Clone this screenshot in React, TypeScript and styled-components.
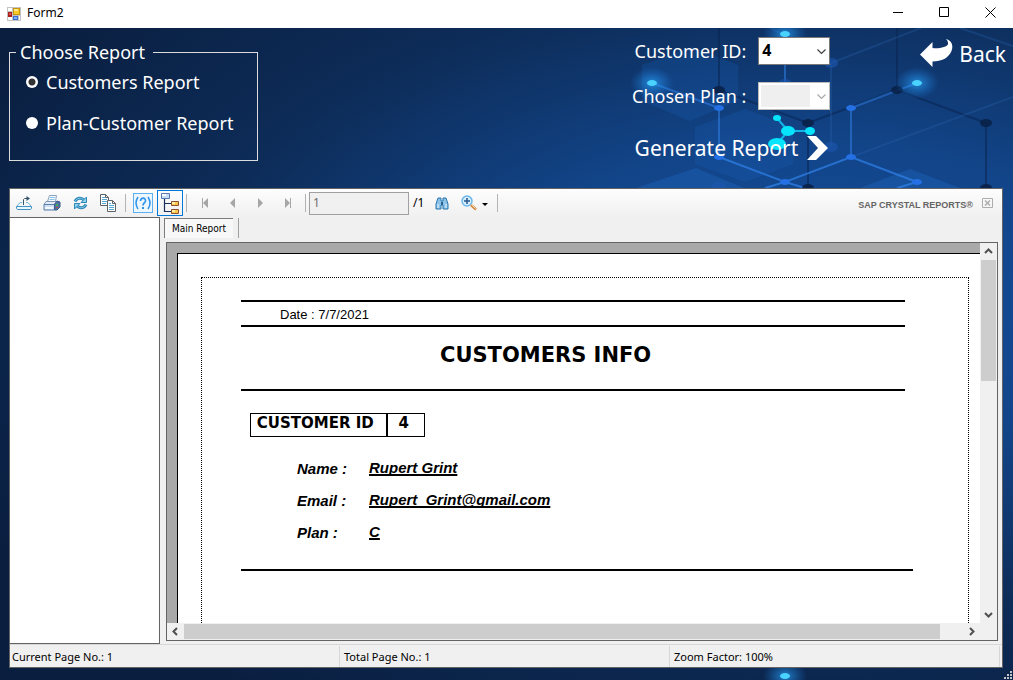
import React from "react";
import styled, { createGlobalStyle } from "styled-components";

const ui = `"Segoe UI", "Noto Sans", "Open Sans", sans-serif`;
const casual = `"Noto Sans", "Open Sans", sans-serif`;
const arial = `Arial, "Liberation Sans", sans-serif`;
const black = `"Arial Black", "DejaVu Sans", sans-serif`;

const GlobalStyle = createGlobalStyle`
  *, *::before, *::after { box-sizing: border-box; }
  body { margin: 0; font-family: ${ui}; font-size: 12px; color: #000; }
  button, input, select { font: inherit; color: inherit; }
  button { background: none; border: 0; padding: 0; }
`;

const Window = styled.div`
  display: flex;
  flex-direction: column;
  min-height: 100vh;
`;

const TitleBar = styled.header`
  display: flex;
  align-items: center;
  height: 28px;
  padding-left: 7px;
  background: #fff;
`;

const Title = styled.h1`
  flex: 1;
  margin: 0 0 3px 6px;
  font-size: 12px;
  font-weight: 400;
  line-height: 16px;
`;

const CaptionButton = styled.button`
  display: flex;
  align-items: center;
  justify-content: center;
  width: 46px;
  height: 28px;
  padding-bottom: 4px;
`;

const Form = styled.main`
  flex: 1;
  display: grid;
  grid-template-columns: minmax(0, 1fr);
  background: radial-gradient(ellipse 78% 62% at 80% 42%, #14509f 0%, #124488 40%, #0d2c58 78%, #0a1e3f 120%);

  > * { grid-area: 1 / 1; }
`;

const Backdrop = styled.svg`
  justify-self: end;
  align-self: start;
`;

const Content = styled.div`
  display: flex;
  flex-direction: column;
  z-index: 1;
`;

const TopArea = styled.div`
  display: flex;
  justify-content: space-between;
  height: 160px;
  padding: 9px 7px 0 9px;
  color: #fff;
  font-family: ${casual};
  font-size: 18px;
  line-height: 26px;
`;

const ReportChoice = styled.fieldset`
  width: 249px;
  height: 122px;
  margin: 2px 0 0;
  padding: 4px 0 0 16px;
  border: 1px solid #dcdcdc;
`;

const Legend = styled.legend`
  margin-left: -10px;
  padding: 0 8px 0 4px;
`;

const RadioLabel = styled.label`
  display: flex;
  align-items: center;
  gap: 8px;
  margin-bottom: 15px;
`;

const Radio = styled.input`
  appearance: none;
  width: 12px;
  height: 12px;
  margin: 0;
  border-radius: 50%;
  background: #fff;

  &:checked { background: radial-gradient(circle, #333 0 3px, #fff 4px); }
`;

const Controls = styled.div`
  display: flex;
  align-items: flex-start;
  gap: 90px;
`;

const Fields = styled.div`
  display: flex;
  flex-direction: column;
  align-items: flex-end;
`;

const Field = styled.div`
  display: flex;
  align-items: center;
  gap: 12px;
  height: 28px;
  margin-bottom: 17px;
`;

const SelectBox = styled.span`
  position: relative;
  display: flex;
  width: 72px;
  height: 28px;

  svg { position: absolute; right: 4px; top: 11px; pointer-events: none; }
`;

const Select = styled.select`
  appearance: none;
  width: 100%;
  padding: 0 0 3px 3px;
  border: 1px solid #7a7a7a;
  border-radius: 0;
  background: #fff;
  color: #000;
  font-size: 16px;
  font-weight: 700;
  line-height: 22px;

  &:disabled {
    opacity: 1;
    border-color: #bcbcbc;
    background: linear-gradient(#efefef, #efefef) 2px 2px / 49px 22px no-repeat #fff;
  }
`;

const ActionButton = styled.button<{ $gap: number }>`
  display: flex;
  align-items: center;
  gap: ${(p) => p.$gap}px;
  font-size: 21px;
`;

const GenerateSlot = styled.div`
  margin: 8px 2px 0 0;
`;

const BackSlot = styled.div`
  padding-top: 2px;
`;

const Viewer = styled.section`
  flex: 1;
  display: flex;
  flex-direction: column;
  margin: 0 10px 0 9px;
  border: 1px solid #646464;
  background: #f0f0f0;
`;

const ToolBar = styled.div`
  display: flex;
  align-items: center;
  height: 28px;
  background: linear-gradient(#fdfdfd, #f0f0f0);
`;

const Tool = styled.button<{ $width?: number; $active?: boolean }>`
  display: flex;
  align-items: center;
  justify-content: center;
  width: ${(p) => p.$width ?? 28}px;
  height: 26px;
  border: 1px solid ${(p) => (p.$active ? "#0078d7" : "transparent")};
`;

const Divider = styled.span`
  width: 1px;
  height: 18px;
  margin: 0 3px;
  background: #b4b4b4;
`;

const PageInput = styled.input`
  width: 100px;
  height: 23px;
  padding: 0 0 2px 3px;
  border: 1px solid #a0a0a0;
  background: #f0f0f0;
  color: #6d6d6d;
`;

const PageTotal = styled.span`
  width: 15px;
  margin: 0 0 1px 4px;
`;

const Brand = styled.span`
  margin-left: auto;
  padding-top: 3px;
  color: #646464;
  font-family: ${arial};
  font-size: 9px;
  font-weight: 700;
`;

const CloseTool = styled(Tool)`
  margin-right: 1px;
`;

const ViewerBody = styled.div`
  flex: 1;
  display: flex;
  min-height: 0;
`;

const GroupTree = styled.aside`
  width: 150px;
  border: solid #646464;
  border-width: 1px 1px 1px 0;
  background: #fff;
`;

const ReportArea = styled.div`
  flex: 1;
  display: flex;
  flex-direction: column;
  min-width: 0;
  padding: 0 4px 3px 6px;
`;

const TabStrip = styled.div`
  display: flex;
  height: 25px;
  margin-left: -2px;
`;

const Tab = styled.button`
  height: 20px;
  width: 69px;
  margin-top: 1px;
  border: solid #7c7c7c;
  border-width: 1px 0 0 1px;
  background: #f8f8f8;
  font-family: Tahoma, "DejaVu Sans Condensed", "Noto Sans", sans-serif;
  font-size: 10px;
  line-height: 16px;
  white-space: nowrap;
`;

const TabEnd = styled.span`
  width: 1px;
  height: 20px;
  margin: 1px 0 0 5px;
  background: #a0a0a0;
`;

const Pane = styled.div`
  flex: 1;
  display: grid;
  grid-template-columns: minmax(0, 1fr) 17px;
  grid-template-rows: minmax(0, 1fr) 17px;
  border: 1px solid #646464;
`;

const Canvas = styled.div`
  padding: 10px 0 0 10px;
  background: #a9a9a9;
  display: flex;
`;

const Sheet = styled.article`
  flex: 1;
  display: flex;
  padding: 23px 11px 0 23px;
  border: solid #000;
  border-width: 1px 0 0 1px;
  background: #fff;
  font-family: ${arial};
`;

const SheetBody = styled.div`
  flex: 1;
  padding: 22px 55px 0 39px;
  border: dotted #000;
  border-width: 1px 1px 0 1px;
`;

const Rule = styled.hr<{ $inset?: boolean }>`
  height: 2px;
  margin: 0 ${(p) => (p.$inset ? 8 : 0)}px 0 0;
  border: 0;
  background: #000;
`;

const DateLine = styled.p`
  margin: 0;
  padding: 5px 0 2px 39px;
  font-size: 13px;
  line-height: 16px;
`;

const ReportTitle = styled.h2`
  margin: 0;
  padding: 16px 0 22px 199px;
  font-family: ${black};
  font-size: 21px;
  font-weight: 900;
  line-height: 24px;
`;

const IdTable = styled.table`
  table-layout: fixed;
  width: 175px;
  margin: 22px 0 0 9px;
  border-collapse: collapse;
  font-family: ${black};
  font-size: 15px;
  font-weight: 900;
  line-height: 18px;

  th, td {
    height: 22px;
    padding: 0 0 4px;
    border: 1px solid #000;
    font-weight: 900;
    text-align: center;
    white-space: nowrap;
  }
  th { width: 136px; padding-right: 6px; border-right-width: 2px; }
  td { padding-right: 4px; }
`;

const Details = styled.dl`
  display: grid;
  grid-template-columns: 72px 1fr;
  row-gap: 12px;
  margin: 21px 0 27px 56px;
  font-size: 15px;
  font-style: italic;
  font-weight: 700;
  line-height: 20px;
`;

const Term = styled.dt`
  padding-top: 1px;
  height: 20px;
`;

const Value = styled.dd`
  margin: 0;
  text-decoration: underline 2px;
  text-underline-offset: 1px;
  text-decoration-skip-ink: none;
`;

const ScrollBar = styled.div<{ $vertical?: boolean }>`
  display: flex;
  flex-direction: ${(p) => (p.$vertical ? "column" : "row")};
  background: #f0f0f0;
  padding: ${(p) => (p.$vertical ? "0 1px" : "1px 0")};
`;

const ScrollArrow = styled.button`
  display: flex;
  align-items: center;
  justify-content: center;
  flex: 0 0 17px;
`;

const Track = styled.div<{ $vertical?: boolean }>`
  flex: 1;
  display: flex;
  flex-direction: ${(p) => (p.$vertical ? "column" : "row")};
`;

const Thumb = styled.div<{ $size: number }>`
  flex: 0 0 ${(p) => p.$size}%;
  background: #cdcdcd;
`;

const StatusBar = styled.footer`
  display: grid;
  grid-template-columns: 1fr 1fr 1fr;
  height: 23px;
  padding-right: 2px;
  border-top: 1px solid #d7d7d7;
  font-size: 11px;
`;

const StatusCell = styled.span`
  margin: 1px 0;
  padding-left: 2px;
  border-right: 1px solid #d7d7d7;
  line-height: 21px;

  & + & { padding-left: 4px; }
`;

const BottomEdge = styled.div`
  display: flex;
  justify-content: flex-end;
  align-items: flex-end;
  height: 12px;
`;

const AppIcon = () => (
  <svg width="14" height="14" viewBox="0 0 14 14" aria-hidden="true">
    <path d="M0 0h14v14H0z" fill="#c3c3c3" />
    <path d="M1 1h4v3H1zM1 10h4v3H1zM12 9h1v4h-1z" fill="#fff" />
    <path d="M6 1h7v7H6z" fill="#c8960c" />
    <path d="M7 2h5v5H7z" fill="#fbc928" />
    <path d="M7 2h4v2H7z" fill="#ffe88a" />
    <path d="M1 5h4v5H1z" fill="#a81c1c" />
    <path d="M2 6h2v2H2z" fill="#d9534f" />
    <path d="M6 9h5v4H6z" fill="#3a6fd0" />
    <path d="M7 10h3v2H7z" fill="#7fb0ff" />
  </svg>
);

const Chevron = ({ color }: { color: string }) => (
  <svg width="9" height="7" viewBox="0 0 9 7" fill="none" stroke={color} aria-hidden="true">
    <path d="M.5 1.500l4 4 4-4" strokeWidth="1.200" />
  </svg>
);

const arrowTurn = { up: 0, right: 90, down: 180, left: 270 };
const ScrollGlyph = ({ to }: { to: keyof typeof arrowTurn }) => (
  <svg width="9" height="9" viewBox="0 0 9 9" fill="none" stroke="#505050" strokeWidth="2" aria-hidden="true">
    <path d="M1 6l3.500-3.500L8 6" transform={`rotate(${arrowTurn[to]} 4.500 4.500)`} />
  </svg>
);

const NavGlyph = ({ bar, back }: { bar?: boolean; back?: boolean }) => (
  <svg width="9" height="10" viewBox="0 0 9 10" fill="#a6a6a6" aria-hidden="true">
    <g transform={back ? "translate(9 0) scale(-1 1)" : undefined}>
      <path d={bar ? "M1 0l5 5-5 5z" : "M2 0l5 5-5 5z"} />
      {bar && <path d="M6 0h1v10H6z" />}
    </g>
  </svg>
);

const ExportIcon = () => (
  <svg width="18" height="16" viewBox="0 0 18 16" fill="none" aria-hidden="true">
    <path d="M1.500 11.500h15v2l-1 1h-13l-1-1z" fill="#eaf6fd" stroke="#3f93c8" />
    <path d="M2 11l3-3.500h2M11 7.500h2l3 3.500" stroke="#6fb5dc" />
    <path d="M8.500 10V4.500l1-1H13" stroke="#35546e" />
    <path d="M11.500 1l3.500 2.500L11.500 6z" fill="#35546e" />
  </svg>
);

const PrintIcon = () => (
  <svg width="18" height="16" viewBox="0 0 18 16" aria-hidden="true">
    <path d="M6.500.5h7l-1 6h-8z" fill="#f4f9fd" stroke="#8ea4bf" />
    <path d="M7 2.500h5M6.500 4.500h5" stroke="#8cc4ea" />
    <path d="M3 6.500h11l-3 3H1z" fill="#e3ecf6" stroke="#7d95b3" />
    <path d="M1 9.500h10.500V15H1z" fill="#cfe0f3" stroke="#5b7fae" />
    <path d="M2 12h8v2H2z" fill="#f3f8fd" />
    <path d="M11.500 9.500L14 6l3 1v5l-3 3h-2.500z" fill="#4f72a6" stroke="#3c5a88" />
    <path d="M13 9h2v2h-2z" fill="#42b052" />
    <path d="M13 12h2v1h-2z" fill="#c84848" />
  </svg>
);

const RefreshIcon = () => (
  <svg width="15" height="14" viewBox="0 0 15 14" fill="none" aria-hidden="true">
    <path d="M2 5.500C4 1.500 8 1.500 11 4M13 8.500c-2 4-6 4-9 1.500" stroke="#2f87b8" strokeWidth="3" />
    <path d="M2 5.500C4 1.500 8 1.500 11 4M13 8.500c-2 4-6 4-9 1.500" stroke="#7fcbea" />
    <path d="M13.500 1v5.500H8zM1.500 13V7.500H7z" fill="#8fd3ef" stroke="#2f87b8" />
  </svg>
);

const CopyIcon = () => (
  <svg width="18" height="18" viewBox="0 0 18 18" fill="none" aria-hidden="true">
    <path d="M1.500.5h5l3 3v8h-8z" fill="#fff" stroke="#5d6268" />
    <path d="M6.500.5v3h3" stroke="#5d6268" />
    <path d="M3 3.500h3M3 5.500h5M3 7.500h5M3 9.500h4" stroke="#55a8d8" />
    <path d="M8.500 6.500h5l3 3v8h-8z" fill="#fff" stroke="#5d6268" />
    <path d="M13.500 6.500v3h3" stroke="#5d6268" />
    <path d="M10 9.500h2M10 11.500h5M10 13.500h5M10 15.500h5" stroke="#55a8d8" />
  </svg>
);

const HelpIcon = () => (
  <svg width="20" height="20" viewBox="0 0 20 20" fill="none" aria-hidden="true">
    <rect x=".5" y=".5" width="19" height="19" fill="#edf7ff" stroke="#5cb0f2" />
    <path d="M5 4Q1 10 5 16M15 4q4 6 0 12" stroke="#2f93ec" strokeWidth="1.500" />
    <path d="M7.500 8c0-4 5.500-3.500 5 0-.3 2-2.500 2-2.500 4.500" stroke="#2f93ec" strokeWidth="1.700" />
    <path d="M9 14h2v2H9z" fill="#2f93ec" />
  </svg>
);

const TreeIcon = () => (
  <svg width="20" height="22" viewBox="0 0 20 22" fill="none" aria-hidden="true">
    <path d="M4.500 7v12.500H12M4.500 11.500H12" stroke="#1c2f5c" strokeWidth="1.200" />
    <path d="M1.500 1.500h8v5h-8z" fill="#c7ddf8" stroke="#5a78ad" />
    <path d="M2 2h4v2H2z" fill="#fff" />
    <path d="M11.500 9.500h7v4h-7zM11.500 17.500h7v4h-7z" fill="#ffc64a" stroke="#8a5230" />
    <path d="M12 10h3v2h-3zM12 18h3v2h-3z" fill="#fff0a8" />
  </svg>
);

const FindIcon = () => (
  <svg width="14" height="13" viewBox="0 0 14 13" aria-hidden="true">
    <path d="M3 1h3v3h2V1h3l2 6v5H8V8H6v4H1V7z" fill="#8dc3e8" stroke="#2876ad" />
    <path d="M3 7v4M11 7v4" stroke="#e6f5ff" />
    <path d="M6 5h2v3H6z" fill="#24618f" />
  </svg>
);

const ZoomIcon = () => (
  <svg width="28" height="16" viewBox="0 0 28 16" fill="none" aria-hidden="true">
    <circle cx="6" cy="6" r="5" fill="#d5eeff" stroke="#6db8ea" strokeWidth="1.500" />
    <path d="M3 6h6M6 3v6" stroke="#26568a" strokeWidth="1.500" />
    <path d="M10 10l5 4.500" stroke="#d28a46" strokeWidth="2.500" />
    <path d="M10.500 9.500l4 4" stroke="#ffd9a8" />
    <path d="M21 8h6l-3 3z" fill="#000" />
  </svg>
);

const CloseIcon = () => (
  <svg width="11" height="10" viewBox="0 0 11 10" fill="none" stroke="#adadad" aria-hidden="true">
    <path d="M.5.5h10v9H.5z" />
    <path d="M3 2.500l5 5M8 2.500l-5 5" strokeWidth="1.500" />
  </svg>
);

const BackIcon = () => (
  <svg width="33" height="29" viewBox="0 0 33 29" fill="#fff" aria-hidden="true">
    <path d="M0 15.500L12.500 3v6c6 1 15-1 15.500-4 .2-2-.5-3.500-2-5 6 1.500 7.500 7 5.500 12-3 7-10 10.500-19 10.500V28z" />
  </svg>
);

const GenerateIcon = () => (
  <svg width="21" height="24" viewBox="0 0 21 24" fill="#fff" aria-hidden="true">
    <path d="M0 0h9l12 12L9 24H0l11-12z" />
  </svg>
);

const Grip = () => (
  <svg width="10" height="10" viewBox="0 0 10 10" fill="#c4c4c4" aria-hidden="true">
    <path d="M7 1h2v2H7zM4 4h2v2H4zM7 4h2v2H7zM1 7h2v2H1zM4 7h2v2H4zM7 7h2v2H7z" />
  </svg>
);

const blueNodes = [[719, 108], [851, 108], [719, 157], [851, 157], [785, 182], [917, 182]];
const softNodes = [[831, 63], [831, 147], [719, 187], [785, 84]];
const darkNodes = [[719, 90], [897, 90], [808, 123], [986, 123], [808, 188], [986, 188]];
const glowNodes = [[785, 34], [652, 83], [917, 83], [785, 676]];

const Molecules = () => (
  <Backdrop width="413" height="652" viewBox="600 28 413 652" fill="none" aria-hidden="true">
    <defs>
      <radialGradient id="glow">
        <stop offset="0" stopColor="#2aa8ff" stopOpacity=".7" />
        <stop offset="1" stopColor="#1c7fe0" stopOpacity="0" />
      </radialGradient>
    </defs>
    <path d="M642 65l50-18 46 18v36l-48 20-48-20zM695 127l50-18 48 18v37l-48 18-50-18z" fill="#1c63bd" opacity=".22" />
    <path d="M636 188l60-20 48 20zM860 188l50-19 50 19z" fill="#2370cc" opacity=".3" />
    <path d="M719 28v62l89 33 89-33V28M897 90l89 33v65M808 123v65" stroke="#0a2450" strokeWidth="2" opacity=".55" />
    <path d="M831 63v84M831 63l90-35M831 63l-60-35M960 28l53 18M851 157l162-60" stroke="#2a62ad" strokeWidth="2" opacity=".3" />
    <path d="M785 34v50M652 83l67 25v49M851 157v-49l66-25" stroke="#2f7fe6" strokeWidth="2" opacity=".55" />
    <path d="M719 157l66 25 66-25 66 25M785 182l-20 6M785 182l20 6M917 182l-20 6" stroke="#2f7fe6" strokeWidth="2" opacity=".75" />
    {softNodes.map(([x, y]) => <ellipse key={`${x}-${y}`} cx={x} cy={y} rx="7" ry="5" fill="#1c57b0" opacity=".6" />)}
    {darkNodes.map(([x, y]) => <ellipse key={`${x}-${y}`} cx={x} cy={y} rx="6" ry="4" fill="#092148" opacity=".9" />)}
    {blueNodes.map(([x, y]) => <ellipse key={`${x}-${y}`} cx={x} cy={y} rx="5" ry="3" fill="#2470e4" />)}
    {glowNodes.map(([x, y]) => (
      <g key={`${x}-${y}`}>
        <ellipse cx={x} cy={y} rx="22" ry="16" fill="url(#glow)" />
        <ellipse cx={x} cy={y} rx="5" ry="3" fill="#4bd3ff" />
      </g>
    ))}
    <path d="M777 118l11 13h22M788 131l-11 13" stroke="#12b5e8" strokeWidth="2" />
    <g fill="#06e4fc">
      <ellipse cx="777" cy="118" rx="4" ry="3" />
      <ellipse cx="788" cy="131" rx="7" ry="5" />
      <ellipse cx="810" cy="131" rx="5" ry="4" />
      <ellipse cx="777" cy="144" rx="9" ry="6" />
    </g>
  </Backdrop>
);

const customer = [
  ["Name :", "Rupert Grint"],
  ["Email :", "Rupert_Grint@gmail.com"],
  ["Plan :", "C"],
];

export default function App() {
  return (
    <Window>
      <GlobalStyle />
      <TitleBar>
        <AppIcon />
        <Title>Form2</Title>
        <CaptionButton aria-label="Minimize">
          <svg width="10" height="10" stroke="#000"><path d="M0 5.500h10" /></svg>
        </CaptionButton>
        <CaptionButton aria-label="Maximize">
          <svg width="10" height="10" stroke="#000" fill="none"><path d="M.5.5h9v9h-9z" /></svg>
        </CaptionButton>
        <CaptionButton aria-label="Close">
          <svg width="11" height="11" stroke="#000"><path d="M.5.5l10 10M10.500.5l-10 10" /></svg>
        </CaptionButton>
      </TitleBar>
      <Form>
        <Molecules />
        <Content>
          <TopArea>
            <ReportChoice>
              <Legend>Choose Report</Legend>
              <RadioLabel>
                <Radio type="radio" name="report" defaultChecked />
                Customers Report
              </RadioLabel>
              <RadioLabel>
                <Radio type="radio" name="report" />
                Plan-Customer Report
              </RadioLabel>
            </ReportChoice>
            <Controls>
              <Fields>
                <Field>
                  <label htmlFor="customer">Customer ID:</label>
                  <SelectBox>
                    <Select id="customer"><option>4</option></Select>
                    <Chevron color="#404040" />
                  </SelectBox>
                </Field>
                <Field>
                  <label htmlFor="plan">Chosen Plan :</label>
                  <SelectBox>
                    <Select id="plan" disabled />
                    <Chevron color="#a8a8a8" />
                  </SelectBox>
                </Field>
                <GenerateSlot>
                  <ActionButton $gap={9}>Generate Report<GenerateIcon /></ActionButton>
                </GenerateSlot>
              </Fields>
              <BackSlot>
                <ActionButton $gap={6}><BackIcon />Back</ActionButton>
              </BackSlot>
            </Controls>
          </TopArea>
          <Viewer>
            <ToolBar>
              <Tool aria-label="Export"><ExportIcon /></Tool>
              <Tool aria-label="Print"><PrintIcon /></Tool>
              <Tool aria-label="Refresh"><RefreshIcon /></Tool>
              <Tool aria-label="Copy"><CopyIcon /></Tool>
              <Divider />
              <Tool aria-label="Help"><HelpIcon /></Tool>
              <Tool aria-label="Group tree" $width={26} $active><TreeIcon /></Tool>
              <Divider />
              <Tool aria-label="First page"><NavGlyph bar back /></Tool>
              <Tool aria-label="Previous page"><NavGlyph back /></Tool>
              <Tool aria-label="Next page"><NavGlyph /></Tool>
              <Tool aria-label="Last page"><NavGlyph bar /></Tool>
              <Divider />
              <PageInput aria-label="Page" defaultValue="1" />
              <PageTotal>/1</PageTotal>
              <Tool aria-label="Find"><FindIcon /></Tool>
              <Tool aria-label="Zoom" $width={38}><ZoomIcon /></Tool>
              <Divider />
              <Brand>SAP CRYSTAL REPORTS®</Brand>
              <CloseTool aria-label="Close view"><CloseIcon /></CloseTool>
            </ToolBar>
            <ViewerBody>
              <GroupTree />
              <ReportArea>
                <TabStrip>
                  <Tab>Main Report</Tab>
                  <TabEnd />
                </TabStrip>
                <Pane>
                  <Canvas>
                    <Sheet>
                      <SheetBody>
                        <Rule $inset />
                        <DateLine>Date : 7/7/2021</DateLine>
                        <Rule $inset />
                        <ReportTitle>CUSTOMERS INFO</ReportTitle>
                        <Rule $inset />
                        <IdTable>
                          <tbody>
                            <tr><th scope="row">CUSTOMER ID</th><td>4</td></tr>
                          </tbody>
                        </IdTable>
                        <Details>
                          {customer.map(([term, value]) => (
                            <React.Fragment key={term}>
                              <Term>{term}</Term>
                              <Value>{value}</Value>
                            </React.Fragment>
                          ))}
                        </Details>
                        <Rule />
                      </SheetBody>
                    </Sheet>
                  </Canvas>
                  <ScrollBar $vertical>
                    <ScrollArrow aria-label="Scroll up"><ScrollGlyph to="up" /></ScrollArrow>
                    <Track $vertical><Thumb $size={35} /></Track>
                    <ScrollArrow aria-label="Scroll down"><ScrollGlyph to="down" /></ScrollArrow>
                  </ScrollBar>
                  <ScrollBar>
                    <ScrollArrow aria-label="Scroll left"><ScrollGlyph to="left" /></ScrollArrow>
                    <Track><Thumb $size={97} /></Track>
                    <ScrollArrow aria-label="Scroll right"><ScrollGlyph to="right" /></ScrollArrow>
                  </ScrollBar>
                  <ScrollBar />
                </Pane>
              </ReportArea>
            </ViewerBody>
            <StatusBar>
              <StatusCell>Current Page No.: 1</StatusCell>
              <StatusCell>Total Page No.: 1</StatusCell>
              <StatusCell>Zoom Factor: 100%</StatusCell>
            </StatusBar>
          </Viewer>
          <BottomEdge><Grip /></BottomEdge>
        </Content>
      </Form>
    </Window>
  );
}
